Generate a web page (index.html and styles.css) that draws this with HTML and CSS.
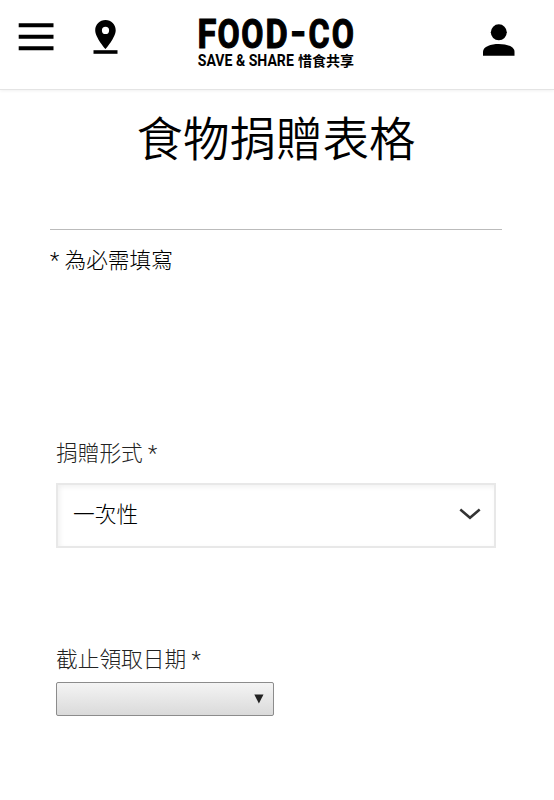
FILE: index.html
```html
<!doctype html>
<html lang="zh-Hant">
  <head>
    <meta charset="utf-8">
    <title>食物捐贈表格</title>
    <link rel="stylesheet" href="styles.css">
  </head>
  <body>

    <header class="header">
      <a class="menu">
        <svg width="36" height="28" viewBox="0 0 36 28"><path d="M0.700 2.200h34.800M0.700 13.800h34.800M0.700 25.200h34.800" stroke="#000" stroke-width="4"/></svg>
      </a>
      <a class="pin">
        <svg width="24" height="34" viewBox="0 0 24 34">
          <path fill-rule="evenodd" d="M12.500 0C6.700 0 2.200 4.500 2.200 10.200C2.200 17.500 12.500 29 12.500 29S22.700 17.500 22.700 10.200C22.700 4.500 18.300 0 12.500 0zM12.500 6.800a3.600 3.600 0 1 1 0 7.200a3.600 3.600 0 0 1 0-7.200z"/>
          <path d="M0.500 30.200h24v3.600h-24z"/>
        </svg>
      </a>
      <a class="logo">
        <svg width="158" height="54" viewBox="0 0 158 54">
          <text class="logo-name" y="32.600"><tspan x="0.400" textLength="18.800" lengthAdjust="spacingAndGlyphs">F</tspan><tspan x="20.400" textLength="22.200" lengthAdjust="spacingAndGlyphs">O</tspan><tspan x="44.200" textLength="22.200" lengthAdjust="spacingAndGlyphs">O</tspan><tspan x="68.500" textLength="22.200" lengthAdjust="spacingAndGlyphs">D</tspan><tspan x="93.300" y="31.200" textLength="16" lengthAdjust="spacingAndGlyphs">-</tspan><tspan x="111.500" y="32.600" textLength="21" lengthAdjust="spacingAndGlyphs">C</tspan><tspan x="134.700" textLength="22.200" lengthAdjust="spacingAndGlyphs">O</tspan></text>
          <text class="logo-tag" x="0.800" y="51.200" textLength="96" lengthAdjust="spacingAndGlyphs">SAVE &amp; SHARE</text>
          <text class="logo-zh" x="101" y="50.800" textLength="56" lengthAdjust="spacingAndGlyphs">惜食共享</text>
        </svg>
      </a>
      <a class="user">
        <svg width="32" height="32" viewBox="0 0 32 32"><circle cx="15.800" cy="8.300" r="8"/><path d="M0 31.800v-4C0 22.500 8 20 15.800 20s15.700 2.500 15.700 7.800v4z"/></svg>
      </a>
    </header>

    <main class="content">
      <h1>食物捐贈表格</h1>
      <p class="required">* 為必需填寫</p>

      <form class="form">
        <div class="field">
          <label>捐贈形式 *</label>
          <div class="select">
            <span>一次性</span>
            <svg width="22" height="12" viewBox="0 0 22 12"><path d="M1.300 1.500L11 9.800L20.700 1.500" fill="none" stroke="#333" stroke-width="2.500"/></svg>
          </div>
        </div>
        <div class="field">
          <label>截止領取日期 *</label>
          <div class="date">
            <svg width="10" height="10" viewBox="0 0 10 10"><path d="M0.300 0.500h9.200L4.900 9.500z" fill="#222"/></svg>
          </div>
        </div>
      </form>
    </main>

  </body>
</html>
```
FILE: styles.css
```css
* {
  box-sizing: border-box;
}
body {
  margin: 0;
  background: #fff;
  color: #000;
  font-family: Roboto, "Noto Sans CJK TC", sans-serif;
  font-weight: 300;
  font-size: 21.7px;
}
svg {
  display: block;
  overflow: visible;
}

.header {
  display: flex;
  align-items: flex-start;
  height: 90px;
  padding: 0 39px 0 18px;
  border-bottom: 1px solid #e4e4e4;
  box-shadow: 0 1px 3px rgba(0, 0, 0, .06);
}
.menu {
  padding-top: 23px;
}
.pin {
  margin-left: 39px;
  padding-top: 20px;
}
.logo {
  margin-left: 80px;
  padding-top: 15px;
}
.user {
  margin-left: auto;
  padding-top: 24px;
}
.logo-name {
  font-family: Roboto, sans-serif;
  font-size: 41px;
  font-weight: 700;
  stroke: #000;
  stroke-width: 1.2px;
}
.logo-tag {
  font-family: Roboto, sans-serif;
  font-size: 16.500px;
  font-weight: 700;
}
.logo-zh {
  font-family: "Noto Sans CJK TC", sans-serif;
  font-size: 14px;
  font-weight: 700;
}

.content {
  padding: 0 52px 0 50px;
}
h1 {
  height: 140px;
  margin: 0;
  padding-top: 15px;
  border-bottom: 1px solid #bbb;
  font-size: 46.500px;
  font-weight: 350;
  line-height: 70px;
  text-align: center;
}
.required {
  margin: 15px 0 0;
  line-height: 32px;
}

.form {
  padding: 161px 6px 0;
}
.field {
  margin-bottom: 94px;
}
.field label {
  display: block;
  height: 45px;
  line-height: 32px;
  color: #222;
}
.select {
  display: flex;
  align-items: center;
  justify-content: space-between;
  height: 65px;
  padding: 0 13px 4px 15px;
  border: 2px solid #e8e8e8;
  box-shadow: inset 2px 2px 5px rgba(0, 0, 0, .06);
}
.select span {
  padding-bottom: 2px;
}
.field + .field {
  padding-top: 2px;
}
.field + .field label {
  height: 38px;
}
.date {
  display: flex;
  align-items: center;
  justify-content: flex-end;
  width: 218px;
  height: 34px;
  padding-right: 9px;
  border: 1px solid #8c8c8c;
  border-radius: 2px;
  background: linear-gradient(#f4f4f4, #dadada);
}
```
